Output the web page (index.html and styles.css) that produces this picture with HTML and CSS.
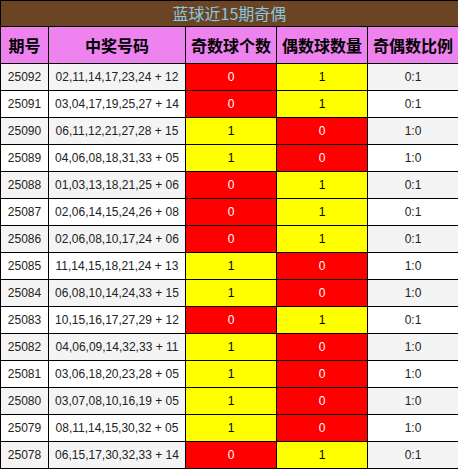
FILE: index.html
```html
<!DOCTYPE html>
<html lang="zh">
<head>
<meta charset="utf-8">
<title>蓝球近15期奇偶</title>
<link rel="stylesheet" href="styles.css">
</head>
<body>
<table class="tbl">
<colgroup><col class="c1"><col class="c2"><col class="c3"><col class="c4"><col class="c5"></colgroup>
<thead>
<tr class="title"><th colspan="5">蓝球近15期奇偶</th></tr>
<tr class="head"><th>期号</th><th>中奖号码</th><th>奇数球个数</th><th>偶数球数量</th><th>奇偶数比例</th></tr>
</thead>
<tbody>
<tr><td>25092</td><td>02,11,14,17,23,24 + 12</td><td class="red">0</td><td class="yel">1</td><td>0:1</td></tr>
<tr><td>25091</td><td>03,04,17,19,25,27 + 14</td><td class="red">0</td><td class="yel">1</td><td>0:1</td></tr>
<tr><td>25090</td><td>06,11,12,21,27,28 + 15</td><td class="yel">1</td><td class="red">0</td><td>1:0</td></tr>
<tr><td>25089</td><td>04,06,08,18,31,33 + 05</td><td class="yel">1</td><td class="red">0</td><td>1:0</td></tr>
<tr><td>25088</td><td>01,03,13,18,21,25 + 06</td><td class="red">0</td><td class="yel">1</td><td>0:1</td></tr>
<tr><td>25087</td><td>02,06,14,15,24,26 + 08</td><td class="red">0</td><td class="yel">1</td><td>0:1</td></tr>
<tr><td>25086</td><td>02,06,08,10,17,24 + 06</td><td class="red">0</td><td class="yel">1</td><td>0:1</td></tr>
<tr><td>25085</td><td>11,14,15,18,21,24 + 13</td><td class="yel">1</td><td class="red">0</td><td>1:0</td></tr>
<tr><td>25084</td><td>06,08,10,14,24,33 + 15</td><td class="yel">1</td><td class="red">0</td><td>1:0</td></tr>
<tr><td>25083</td><td>10,15,16,17,27,29 + 12</td><td class="red">0</td><td class="yel">1</td><td>0:1</td></tr>
<tr><td>25082</td><td>04,06,09,14,32,33 + 11</td><td class="yel">1</td><td class="red">0</td><td>1:0</td></tr>
<tr><td>25081</td><td>03,06,18,20,23,28 + 05</td><td class="yel">1</td><td class="red">0</td><td>1:0</td></tr>
<tr><td>25080</td><td>03,07,08,10,16,19 + 05</td><td class="yel">1</td><td class="red">0</td><td>1:0</td></tr>
<tr><td>25079</td><td>08,11,14,15,30,32 + 05</td><td class="yel">1</td><td class="red">0</td><td>1:0</td></tr>
<tr><td>25078</td><td>06,15,17,30,32,33 + 14</td><td class="red">0</td><td class="yel">1</td><td>0:1</td></tr>
</tbody>
</table>
</body>
</html>
```
FILE: styles.css
```css
html, body {
  margin: 0;
  padding: 0;
  background: #ffffff;
}
.tbl {
  width: 458px;
  border-collapse: collapse;
  table-layout: fixed;
  font-family: "Liberation Sans", Arial, "Noto Sans CJK SC", sans-serif;
  font-size: 12px;
  color: #222222;
}
.c1 { width: 48px; }
.c2 { width: 137px; }
.c3 { width: 91px; }
.c4 { width: 91px; }
.c5 { width: 91px; }
.tbl th, .tbl td {
  border: 1px solid #000000;
  padding: 0;
  text-align: center;
  overflow: hidden;
  white-space: nowrap;
}
.title th {
  height: 25px;
  background: #6b4423;
  color: #87c9e0;
  font-weight: normal;
  font-size: 16px;
  font-family: "Noto Sans CJK SC", sans-serif;
  line-height: 25px;
}
.head th {
  height: 36px;
  background: #ee82ee;
  color: #000000;
  font-weight: bold;
  font-size: 16px;
  font-family: "Noto Sans CJK SC", sans-serif;
}
.tbl tbody td {
  height: 26px;
}
.tbl tbody tr:nth-child(odd) td {
  background: #f4f4f4;
}
.tbl tbody tr:nth-child(even) td {
  background: #ffffff;
}
.tbl tbody tr td.red {
  background: #ff0000;
  color: #ffffff;
}
.tbl tbody tr td.yel {
  background: #ffff00;
  color: #000000;
}
```
